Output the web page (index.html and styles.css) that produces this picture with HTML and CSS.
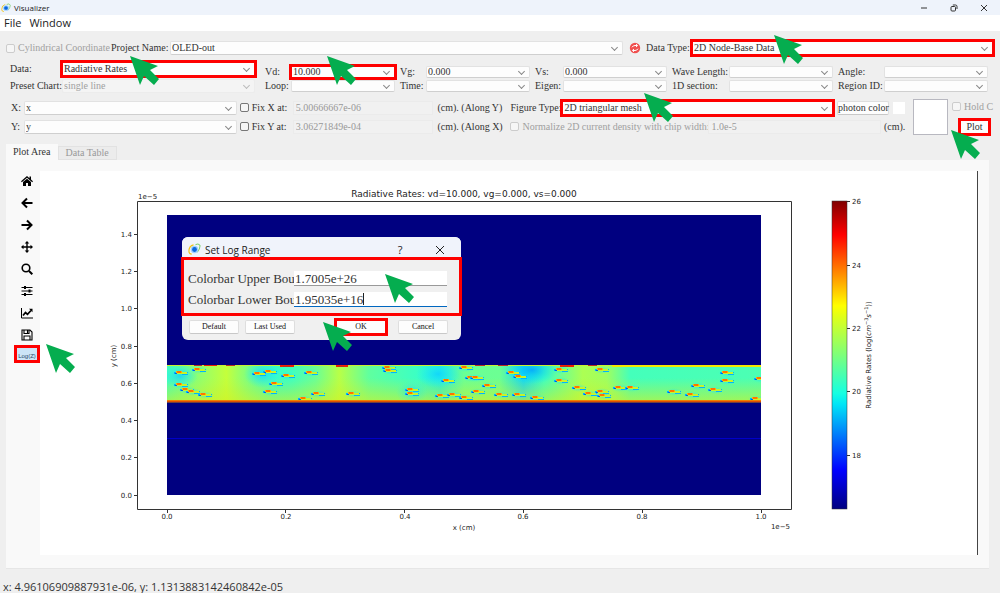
FILE: index.html
```html
<!DOCTYPE html>
<html lang="en">
<head>
<meta charset="utf-8">
<title>Visualizer</title>
<link rel="stylesheet" href="styles.css">
</head>
<body>
<svg class="defs" aria-hidden="true">
  <symbol id="logo" viewBox="0 0 14 14">
    <path d="M6 2Q1 3 1 9q0 3 3 3" fill="none" stroke="#f0c419" stroke-width="1.2"/>
    <path d="M8 2q4-2 5 1 0 3-3 7" fill="none" stroke="#7ccf6a" stroke-width="1.1"/>
    <circle cx="7" cy="7" r="4" fill="#9fd0ff"/><circle cx="7" cy="7" r="2.6" fill="#0a66e0"/>
  </symbol>
  <symbol id="arrow" viewBox="0 0 29 29"><path d="M0 0 28 10 20 14 29 23 24 29 14 20 10 29z" fill="#05ad4f"/></symbol>
</svg>

<header class="titlebar">
  <svg class="logo"><use href="#logo"/></svg>
  <span class="title">Visualizer</span>
  <div class="winbtns">
    <button aria-label="Minimize"><svg viewBox="0 0 8 8"><path d="M1 4h6"/></svg></button>
    <button aria-label="Restore"><svg viewBox="0 0 8 8"><rect x="1" y="2.5" width="4.5" height="4.5" rx="1"/><path d="M2.8 1h2.7Q7 1 7 2.5V5"/></svg></button>
    <button aria-label="Close"><svg viewBox="0 0 8 8"><path d="M1 1l6 6M7 1 1 7"/></svg></button>
  </div>
</header>
<nav class="menubar"><button>File</button><button>Window</button></nav>

<main class="body">
  <div class="row project">
    <label class="check off"><input type="checkbox" disabled>Cylindrical Coordinate</label>
    <label for="proj">Project Name:</label>
    <span class="combo"><select id="proj"><option>OLED-out</option></select></span>
    <button class="refresh" aria-label="Refresh"><svg viewBox="0 0 12 12"><circle cx="6" cy="6" r="5.2" fill="#f0504f"/><path d="M3 5.300Q4 3.500 6 3.500h2M7 2.200l1.600 1.400L7 5M9 6.700Q8 8.500 6 8.500H4M5 7 3.400 8.400 5 9.800" fill="none" stroke="#fff" stroke-width="1"/></svg></button>
    <label for="dtype">Data Type:</label>
    <span class="combo mark"><select id="dtype"><option>2D Node-Base Data</option></select></span>
  </div>

  <div class="row params">
    <div class="datasel">
      <label for="data">Data:</label>
      <span class="combo mark"><select id="data"><option>Radiative Rates</option></select></span>
      <label for="preset">Preset Chart:</label>
      <span class="combo off"><select id="preset" disabled><option>single line</option></select></span>
    </div>
    <div class="sweep">
      <label for="vd">Vd:</label><span class="combo mark"><select id="vd"><option>10.000</option></select></span>
      <label for="vg">Vg:</label><span class="combo"><select id="vg"><option>0.000</option></select></span>
      <label for="vs">Vs:</label><span class="combo"><select id="vs"><option>0.000</option></select></span>
      <label for="wl">Wave Length:</label><span class="combo"><select id="wl"></select></span>
      <label for="ang">Angle:</label><span class="combo"><select id="ang"></select></span>
      <label for="loop">Loop:</label><span class="combo"><select id="loop"></select></span>
      <label for="time">Time:</label><span class="combo"><select id="time"></select></span>
      <label for="eig">Eigen:</label><span class="combo"><select id="eig"></select></span>
      <label for="sec">1D section:</label><span class="combo"><select id="sec"></select></span>
      <label for="reg">Region ID:</label><span class="combo"><select id="reg"></select></span>
    </div>
  </div>

  <div class="row axes">
    <div class="xy">
      <label for="xs">X:</label><span class="combo"><select id="xs"><option>x</option></select></span>
      <label class="check"><input type="checkbox">Fix X at:</label>
      <input class="field" aria-label="X value" disabled value="5.00666667e-06"><span>(cm). (Along Y)</span>
      <label for="ys">Y:</label><span class="combo"><select id="ys"><option>y</option></select></span>
      <label class="check"><input type="checkbox">Fix Y at:</label>
      <input class="field" aria-label="Y value" disabled value="3.06271849e-04"><span>(cm). (Along X)</span>
    </div>
    <div class="figtype">
      <div class="line">
        <label class="ftlabel" for="ft">Figure Type:</label>
        <span class="combo mark"><select id="ft"><option>2D triangular mesh</option></select></span>
        <button class="btn photon">photon color</button>
        <span class="swatch"></span>
      </div>
      <div class="line">
        <label class="check off norm"><input type="checkbox" disabled>Normalize 2D current density with chip width:</label>
        <input class="field" aria-label="Chip width" disabled value="1.0e-5"><span class="unit">(cm).</span>
      </div>
    </div>
    <div class="preview"></div>
    <div class="plotcol">
      <label class="check off"><input type="checkbox" disabled>Hold C</label>
      <button class="btn mark plot">Plot</button>
    </div>
  </div>

  <div class="tabs"><button class="tab active">Plot Area</button><button class="tab">Data Table</button></div>

  <section class="pane">
    <div class="tools">
      <button aria-label="Home"><svg viewBox="0 0 12 12"><path d="M6 1 0 6.300l.8.900L6 2.800l5.200 4.400.8-.9-2-1.800V1.500H8.500v1.700zM2 7v4h3V8h2v3h3V7L6 3.700z"/></svg></button>
      <button aria-label="Back"><svg viewBox="0 0 12 12"><path d="M6 1.500 1.500 6 6 10.500M2 6h9.500" class="ln"/></svg></button>
      <button aria-label="Forward"><svg viewBox="0 0 12 12"><path d="M6 1.500 10.500 6 6 10.500M10 6H.5" class="ln"/></svg></button>
      <button aria-label="Pan"><svg viewBox="0 0 12 12"><path d="M6 0 8.300 2.500H6.700v2.800h2.800V3.700L12 6 9.500 8.300V6.700H6.700v2.800h1.600L6 12 3.700 9.500h1.600V6.700H2.500v1.600L0 6l2.500-2.300v1.600h2.800V2.500H3.700z"/></svg></button>
      <button aria-label="Zoom"><svg viewBox="0 0 12 12"><circle cx="5" cy="5" r="3.800" fill="none" stroke="#000" stroke-width="1.600"/><path d="m8 8 3.300 3.300" class="ln"/></svg></button>
      <button aria-label="Subplots"><svg viewBox="0 0 12 12"><path d="M.5 2.500h11M.5 6h11M.5 9.500h11" fill="none" stroke="#000"/><path d="M3 1h2v3H3zM7.500 4.500h2v3h-2zM3 8h2v3H3z"/></svg></button>
      <button aria-label="Customize"><svg viewBox="0 0 12 12"><path d="M.5 1v10H12" fill="none" stroke="#000"/><path d="M2 8.500 4.500 5.500l2 1.800L10 3.500" fill="none" stroke="#000" stroke-width="1.700"/><path d="M8 1.800h3.500v3.500z"/></svg></button>
      <button aria-label="Save"><svg viewBox="0 0 12 12"><path d="M1 1h8l2 2v8H1zM3 1v3.500h5V1M3 11V7h6v4M6.500 1.500V4" fill="none" stroke="#000" stroke-width="1.100"/></svg></button>
      <button class="log mark">Log(Z)</button>
    </div>

    <div class="figure">
      <svg class="plot-svg" viewBox="40 171 937 384" role="img" aria-label="Radiative Rates plot">
        <defs>
          <linearGradient id="band">
            <stop offset="0" stop-color="#3fffc0"/><stop offset=".05" stop-color="#8cff73"/><stop offset=".1" stop-color="#c4ff3b"/>
            <stop offset=".14" stop-color="#78ff87"/><stop offset=".18" stop-color="#38ffc7"/><stop offset=".21" stop-color="#40ffbf"/><stop offset=".25" stop-color="#6aff95"/>
            <stop offset=".29" stop-color="#b8ff47"/><stop offset=".34" stop-color="#60ff9f"/><stop offset=".42" stop-color="#3cffc3"/>
            <stop offset=".46" stop-color="#20f0df"/><stop offset=".5" stop-color="#6aff95"/><stop offset=".56" stop-color="#6cff93"/>
            <stop offset=".6" stop-color="#14d8f4"/><stop offset=".635" stop-color="#40ffbf"/><stop offset=".7" stop-color="#acff53"/>
            <stop offset=".74" stop-color="#a0ff5f"/><stop offset=".78" stop-color="#44ffbb"/><stop offset="1" stop-color="#4cffb3"/>
          </linearGradient>
          <linearGradient id="floor" x2="0" y2="1"><stop offset=".35" stop-color="#c8f030" stop-opacity="0"/><stop offset="1" stop-color="#d4f020" stop-opacity=".65"/></linearGradient>
          <linearGradient id="jet" x2="0" y2="1">
            <stop offset="0" stop-color="#800000"/><stop offset=".11" stop-color="#f00"/><stop offset=".34" stop-color="#ff0"/>
            <stop offset=".375" stop-color="#e0ff18"/><stop offset=".5" stop-color="#7dff7a"/><stop offset=".625" stop-color="#15ffe2"/>
            <stop offset=".66" stop-color="#00e5f7"/><stop offset=".875" stop-color="#00f"/><stop offset="1" stop-color="#000080"/>
          </linearGradient>
          <radialGradient id="cool"><stop offset="0" stop-color="#00a0ff"/><stop offset="1" stop-color="#00e0ff" stop-opacity="0"/></radialGradient>
          <radialGradient id="halo"><stop offset="0" stop-color="#10d0ff" stop-opacity=".8"/><stop offset="1" stop-color="#20f0ff" stop-opacity="0"/></radialGradient>
          <g id="dot">
            <ellipse cx="2" cy="1" rx="9" ry="4" fill="url(#halo)" opacity=".7"/>
            <path d="M-5 0h2v2h-2zM7 0h2v1h-2zM3 2h6v1H3z" fill="#00b4ff"/>
            <path d="M-4 1h2v1h-2z" fill="#0060f0"/>
            <path d="M-2 0h10v2H-2z" fill="#c8f428"/><path d="M-3-1h6v2h-6z" fill="#ffb400"/><path d="M-2-1h4v2h-4z" fill="#ff7400"/>
          </g>
          <clipPath id="bandclip"><rect x="167" y="365" width="594" height="38"/></clipPath>
        </defs>
        <rect x="167" y="215" width="594" height="280" fill="#000080"/>
        <path d="M167 438.500h594" stroke="#0000c8"/>
        <g clip-path="url(#bandclip)">
          <rect x="167" y="365" width="594" height="37" fill="url(#band)"/>
          <rect x="167" y="365" width="594" height="37" fill="url(#floor)"/>
          <ellipse cx="532" cy="370" rx="26" ry="14" fill="url(#cool)" opacity=".8"/>
          <ellipse cx="438" cy="374" rx="22" ry="14" fill="url(#halo)"/>
          <ellipse cx="180" cy="376" rx="18" ry="12" fill="url(#halo)"/>
          <ellipse cx="262" cy="374" rx="18" ry="14" fill="url(#halo)"/>
          <ellipse cx="412" cy="392" rx="16" ry="12" fill="url(#halo)" opacity=".6"/>
          <path d="M167 365.500h594" stroke="#c8f030"/>
          <path d="M612 366h149" stroke="#f4e800" stroke-width="2"/>
          <use href="#dot" x="179" y="372"/><use href="#dot" x="197" y="369"/><use href="#dot" x="257" y="373"/><use href="#dot" x="268" y="371"/>
          <use href="#dot" x="286" y="375"/><use href="#dot" x="274" y="383"/><use href="#dot" x="268" y="391"/><use href="#dot" x="179" y="384"/>
          <use href="#dot" x="185" y="389"/><use href="#dot" x="191" y="391"/><use href="#dot" x="203" y="394"/><use href="#dot" x="309" y="372"/>
          <use href="#dot" x="316" y="393"/><use href="#dot" x="303" y="398"/><use href="#dot" x="351" y="393"/><use href="#dot" x="387" y="367"/>
          <use href="#dot" x="388" y="370"/><use href="#dot" x="410" y="389"/><use href="#dot" x="410" y="393"/><use href="#dot" x="446" y="380"/>
          <use href="#dot" x="440" y="395"/><use href="#dot" x="452" y="394"/><use href="#dot" x="464" y="367"/><use href="#dot" x="464" y="397"/>
          <use href="#dot" x="470" y="377"/><use href="#dot" x="475" y="377"/><use href="#dot" x="476" y="391"/><use href="#dot" x="487" y="385"/>
          <use href="#dot" x="499" y="394"/><use href="#dot" x="511" y="372"/><use href="#dot" x="518" y="376"/><use href="#dot" x="517" y="394"/>
          <use href="#dot" x="535" y="397"/><use href="#dot" x="559" y="369"/><use href="#dot" x="559" y="380"/><use href="#dot" x="577" y="387"/>
          <use href="#dot" x="588" y="393"/><use href="#dot" x="600" y="391"/><use href="#dot" x="602" y="395"/><use href="#dot" x="600" y="369"/>
          <use href="#dot" x="618" y="387"/><use href="#dot" x="630" y="387"/><use href="#dot" x="672" y="391"/><use href="#dot" x="690" y="394"/>
          <use href="#dot" x="696" y="385"/><use href="#dot" x="713" y="389"/><use href="#dot" x="725" y="372"/><use href="#dot" x="725" y="380"/>
          <use href="#dot" x="759" y="378"/><use href="#dot" x="755" y="398"/>
          <path d="M280 365h14v2h-14zM336 365h12v2h-12zM560 365h14v2h-14zM204 365h13v1h-13z" fill="#f02000"/>
          <path d="M283 366h7v1h-7zM338 366h6v1h-6zM563 366h5v1h-5zM194 365h8v1h-8zM226 365h9v1h-9zM475 365h10v1h-10zM498 365h10v1h-10zM588 365h9v1h-9z" fill="#b83020"/>
          <path d="M167 400h594v2H167z" fill="#f08000"/><path d="M167 401h594v1H167z" fill="#e05000"/><path d="M167 402h594v1H167z" fill="#704040"/>
        </g>
        <g fill="none" stroke="#333" stroke-width="1">
          <path d="M137.500 201.500H791.500V509.500H137.500z"/>
          <path d="M134 234.500h3M134 271.500h3M134 308.500h3M134 346.500h3M134 383.500h3M134 420.500h3M134 457.500h3M134 495.500h3"/>
          <path d="M167.500 510v3M285.500 510v3M404.500 510v3M523.500 510v3M642.500 510v3M761.500 510v3"/>
          <path d="M847 201.500h3M847 265.500h3M847 328.500h3M847 391.500h3M847 455.500h3"/>
        </g>
        <rect x="832" y="201" width="15" height="308" fill="url(#jet)" stroke="#333" stroke-width=".5"/>
        <g class="tick end">
          <text x="132" y="237">1.4</text><text x="132" y="274">1.2</text><text x="132" y="311">1.0</text><text x="132" y="349">0.8</text>
          <text x="132" y="386">0.6</text><text x="132" y="423">0.4</text><text x="132" y="460">0.2</text><text x="132" y="498">0.0</text>
          <text x="790" y="529">1e−5</text>
        </g>
        <g class="tick mid">
          <text x="167" y="519">0.0</text><text x="286" y="519">0.2</text><text x="405" y="519">0.4</text><text x="523" y="519">0.6</text>
          <text x="642" y="519">0.8</text><text x="761" y="519">1.0</text><text x="464" y="530">x (cm)</text>
          <text transform="translate(116 356) rotate(-90)">y (cm)</text>
          <text transform="translate(871 355) rotate(-90)">Radiative Rates (log(<tspan class="it">cm</tspan><tspan class="sup" dy="-3">−3</tspan><tspan class="it" dy="3">s</tspan><tspan class="sup" dy="-3">−1</tspan><tspan dy="3">))</tspan></text>
        </g>
        <g class="tick">
          <text x="138" y="199">1e−5</text>
          <text x="852" y="204">26</text><text x="852" y="268">24</text><text x="852" y="331">22</text><text x="852" y="394">20</text><text x="852" y="458">18</text>
        </g>
        <text class="ptitle" x="464" y="197">Radiative Rates: vd=10.000, vg=0.000, vs=0.000</text>
      </svg>

      <div class="dialog" role="dialog" aria-label="Set Log Range">
        <div class="dhead">
          <svg class="logo"><use href="#logo"/></svg><span class="dtitle">Set Log Range</span>
          <button aria-label="Help">?</button>
          <button aria-label="Close"><svg viewBox="0 0 10 10"><path d="M1 1l8 8M9 1 1 9" stroke="#222" fill="none"/></svg></button>
        </div>
        <div class="dform mark">
          <label for="ub">Colorbar Upper Bou</label><input id="ub" value="1.7005e+26">
          <label for="lb">Colorbar Lower Bou</label><span class="active-field"><input id="lb" value="1.95035e+16"><i class="caret"></i></span>
        </div>
        <div class="dbtns">
          <button class="btn">Default</button><button class="btn">Last Used</button><button class="btn mark ok">OK</button><button class="btn">Cancel</button>
        </div>
      </div>
    </div>
  </section>
</main>
<footer class="status">x: 4.96106909887931e-06, y: 1.1313883142460842e-05</footer>

<svg class="pointer p-project"><use href="#arrow"/></svg>
<svg class="pointer p-vd"><use href="#arrow"/></svg>
<svg class="pointer p-type"><use href="#arrow"/></svg>
<svg class="pointer p-figure"><use href="#arrow"/></svg>
<svg class="pointer p-plot"><use href="#arrow"/></svg>
<svg class="pointer p-log"><use href="#arrow"/></svg>
<svg class="pointer p-upper"><use href="#arrow"/></svg>
<svg class="pointer p-ok"><use href="#arrow"/></svg>
</body>
</html>
```
FILE: styles.css
```css
* { box-sizing: border-box; }
body {
  margin: 0;
  min-height: 100vh;
  display: flex;
  flex-direction: column;
  position: relative;
  overflow: hidden;
  background: #efefef;
  color: #333;
  font: 10px/12px "Liberation Serif", serif;
}
button, input, select { font: inherit; color: inherit; margin: 0; padding: 0; border: 0; background: none; border-radius: 0; }
label, span { white-space: nowrap; }
svg { display: block; }
.defs { position: absolute; width: 0; height: 0; }

.titlebar { display: flex; align-items: center; height: 15px; padding: 0 12px 0 1px; gap: 3px; background: #eef3fb; font: 8px/14px "Open Sans", sans-serif; color: #222; }
.logo { width: 10px; height: 10px; }
.title { flex: 1; }
.winbtns { display: flex; gap: 22px; }
.winbtns button { width: 8px; height: 8px; }
.winbtns svg { width: 8px; height: 8px; fill: none; stroke: #333; }
.menubar { display: flex; gap: 8px; height: 16px; padding-left: 4px; background: #fff; font: 11px/16px "Open Sans", sans-serif; color: #222; }

.body { display: flex; flex-direction: column; padding-top: 10px; }
.row { display: grid; align-items: center; }
.project { grid-template-columns: 105px 59px 453fr 23px 46px 301fr; padding: 0 7px 0 6px; height: 14px; }
.params { grid-template-columns: 245fr 723fr; gap: 10px; padding: 0 12px 0 10px; margin-top: 7px; }
.datasel { display: grid; grid-template-columns: 52px 1fr; row-gap: 3px; align-items: center; }
.datasel .combo { height: 14px; }
.sweep { display: grid; grid-template-columns: 26px 1fr 31px 1fr 33px 1fr 62px 1fr 51px 1fr; row-gap: 2px; align-items: center; margin-top: 2px; }
.sweep .combo { height: 12px; }
.sweep .combo ~ label { padding-left: 5px; }
.sweep label:nth-of-type(6) { padding-left: 0; }
.axes { grid-template-columns: 492fr 395fr 35px 35px; column-gap: 8px; padding: 0 9px 0 11px; margin-top: 6px; }
.xy { display: grid; grid-template-columns: 13px 213fr 56px 141fr 69px; row-gap: 5px; align-items: center; }
.xy .check { padding-left: 3px; }
.xy > span:not(.combo) { padding-left: 4px; }
.xy .combo, .field { height: 14px; }

.combo { position: relative; display: block; height: 14px; min-width: 0; background: #fdfdfd; border: 1px solid #e2e2e2; border-bottom-color: #cfcfcf; border-radius: 2px; }
.combo select { display: block; width: 100%; height: 100%; appearance: none; padding-left: 1px; outline: 0; line-height: 10px; }
.combo::after { content: ""; position: absolute; right: 5px; top: calc(50% - 3px); width: 4px; height: 4px; border: solid #888; border-width: 0 1px 1px 0; transform: rotate(45deg); pointer-events: none; }
.combo.off { background: #f4f4f4; border-color: #ececec; color: #a0a0a0; }
.combo.off select { opacity: 1; }
.combo.off::after { border-color: #bbb; }
.field { width: 100%; min-width: 0; padding-left: 2px; border: 1px solid #ebebeb; background: #f1f1f1; color: #999; }
.off { color: #a0a0a0; }
.check { display: flex; align-items: center; gap: 3px; }
.check input { appearance: none; flex: none; width: 9px; height: 9px; border: 1px solid #777; border-radius: 2px; background: #f6f6f6; }
.check.off input { border-color: #ccc; }
.refresh { justify-self: center; width: 12px; height: 12px; }
.btn { background: #fdfdfd; border: 1px solid #dedede; border-bottom-color: #c8c8c8; border-radius: 2px; white-space: nowrap; }
.combo.mark, .btn.mark, .mark { outline: 3px solid #fe0000; outline-offset: -1px; border-radius: 0; }

.figtype { display: flex; flex-direction: column; gap: 5px; }
.line { display: flex; align-items: center; height: 14px; }
.ftlabel { width: 52px; }
.line .combo { flex: 1; }
.photon { width: 52px; height: 14px; margin-left: 4px; line-height: 12px; }
.swatch { width: 12px; height: 12px; margin-left: 4px; background: #fff; }
.norm { width: 198px; }
.line .field { flex: 1; width: 0; }
.unit { width: 21px; margin-left: 3px; }
.preview { height: 36px; background: #fff; border: 1px solid #b8b8c0; }
.plotcol { display: flex; flex-direction: column; gap: 7px; margin-left: -4px; }
.plot { width: 29px; height: 14px; margin-left: 8px; line-height: 12px; }

.tabs { display: flex; align-items: flex-end; margin: 9px 0 0 6px; height: 16px; }
.tab { height: 14px; padding: 0 7px; border: 1px solid #e2e2e2; background: #ececec; color: #999; }
.tab.active { height: 16px; padding: 0 7px; border: 0; background: #f9f9f9; color: #333; }
.pane { display: flex; margin: 0 11px 0 6px; padding: 11px 11px 13px 0; background: #f9f9f9; border-bottom: 1px solid #e6e6e6; }
.tools { display: flex; flex-direction: column; align-items: center; gap: 10px; width: 34px; padding: 4px 0 0 8px; flex: none; }
.tools button { width: 12px; height: 12px; }
.tools svg { width: 12px; height: 12px; }
.tools .ln { fill: none; stroke: #000; stroke-width: 2; }
.tools button.log { width: 22px; height: 14px; margin: -4px 0 0; padding-top: 3px; background: #cce4f7; color: #2b4a66; font: 6px/8px "Liberation Sans", sans-serif; }
.figure { position: relative; flex: 1; min-width: 0; background: #fff; border-right: 1px solid #444; }
.plot-svg { width: 100%; height: auto; }
.tick { font: 7px "DejaVu Sans", sans-serif; fill: #222; }
.end { text-anchor: end; }
.mid { text-anchor: middle; }
.it { font-style: italic; }
.sup { font-size: 5px; }
.ptitle { font: 9px "DejaVu Sans", sans-serif; fill: #222; text-anchor: middle; }

.dialog { position: absolute; left: 142px; top: 66px; width: 279px; background: #f0f0f0; border-radius: 6px; }
.dhead { display: flex; align-items: center; height: 21px; padding: 4px 16px 0 6px; background: #f0f3fb; border-radius: 6px 6px 0 0; font: 10px/14px "Open Sans", sans-serif; color: #222; }
.dhead .logo { width: 13px; height: 13px; }
.dtitle { flex: 1; margin-left: 4px; }
.dhead button { width: 10px; margin-left: 30px; font-size: 11px; }
.dhead svg { width: 10px; height: 10px; }
.dform { display: grid; grid-template-columns: 106px 1fr; row-gap: 6px; padding: 13px 14px 8px 6px; font-size: 13px; line-height: 15px; }
.mark.dform { outline-offset: -2px; }
.dform input { display: block; position: relative; width: 100%; height: 15px; padding-left: 1px; background: #fff; border-bottom: 1px solid #999; outline: 0; }
.active-field { position: relative; }
.dform .active-field input { border-bottom-color: #0067c0; }
.caret { position: absolute; left: 69px; top: 1px; width: 1px; height: 12px; background: #222; }
.dbtns { display: flex; padding: 5px 13px 6px 7px; gap: 6px; font-size: 8px; line-height: 10px; color: #111; }
.dbtns .btn { width: 50px; height: 14px; }
.dbtns .ok { margin-left: auto; margin-right: 6px; }

.status { flex: 1; display: flex; align-items: flex-end; padding: 0 3px; font: 11px/13px "Open Sans", sans-serif; color: #333; }

.pointer { position: absolute; width: 29px; height: 29px; }
.p-project { left: 130px; top: 56px; }
.p-vd { left: 327px; top: 56px; }
.p-type { left: 774px; top: 35px; }
.p-figure { left: 644px; top: 93px; }
.p-plot { left: 951px; top: 130px; }
.p-log { left: 46px; top: 344px; }
.p-upper { left: 385px; top: 274px; }
.p-ok { left: 323px; top: 322px; }
```
